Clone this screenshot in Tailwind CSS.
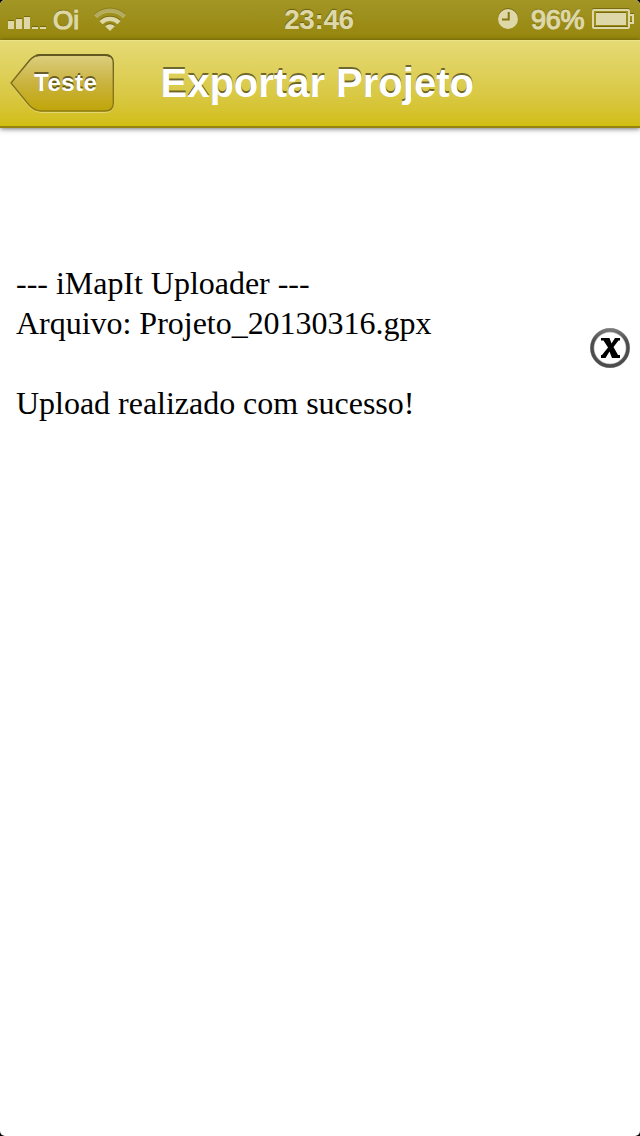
<!DOCTYPE html>
<html lang="pt-BR">
  <head>
    <meta charset="UTF-8" />
    <meta name="viewport" content="width=device-width, initial-scale=1.0" />
    <script src="https://cdn.jsdelivr.net/npm/@tailwindcss/browser@4"></script>
    <title>Exportar Projeto</title>
  </head>
  <body class="bg-black">
    <div class="flex flex-col w-[640px] h-[1136px] bg-white rounded-[5px] overflow-hidden">
      <!-- status bar -->
      <div class="grid grid-cols-3 items-center h-10 shrink-0 bg-linear-to-b from-[#a39625] to-[#96860b] text-[#ded8a8] font-['Liberation_Sans',sans-serif] font-bold text-[28px] leading-10 [text-shadow:0_-1px_1px_rgba(70,60,0,0.6)]">
        <div class="flex items-center pl-2">
          <svg class="w-[38px] h-10 shrink-0 drop-shadow-[0_-1px_0_rgba(70,60,0,0.45)]" viewBox="0 0 38 40" fill="#ded8a8">
            <path d="M0 21h6v8H0zM8 19h6v10H8zM16 17h6v12h-6zM24 27h6v2h-6zM32 27h6v2h-6z" />
          </svg>
          <span class="ml-[7px] w-[26px] text-[26px] font-normal [-webkit-text-stroke:1.2px_#ded8a8]">Oi</span>
          <svg class="ml-[15px] w-8 h-10 shrink-0 drop-shadow-[0_-1px_0_rgba(70,60,0,0.45)]" viewBox="0 0 32 40" fill="none" stroke="#ded8a8" stroke-width="4.400">
            <path d="M1.500 16.600a20.500 20.500 0 0 1 29 0" opacity=".5" />
            <path d="M7 22.600a12.700 12.700 0 0 1 18 0" />
            <path d="M16 31l-4.800-4.800a6.800 6.800 0 0 1 9.600 0z" fill="#ded8a8" stroke="none" />
          </svg>
        </div>
        <div class="pr-0.5 text-center tracking-[-0.4px]">23:46</div>
        <div class="flex items-center justify-end pr-1.5">
          <svg class="w-5 h-10 shrink-0 drop-shadow-[0_-1px_0_rgba(70,60,0,0.45)]" viewBox="0 0 20 40">
            <circle cx="10" cy="19" r="10" fill="#ded8a8" />
            <path d="M10.700 12v7.500H4" fill="none" stroke="#83760c" stroke-width="2" />
          </svg>
          <span class="ml-[13px] w-[54px] text-[27px] font-normal tracking-[-0.2px] [-webkit-text-stroke:1.2px_#ded8a8]">96%</span>
          <svg class="ml-[7px] w-[42px] h-10 shrink-0 drop-shadow-[0_-1px_0_rgba(70,60,0,0.45)]" viewBox="0 0 42 40" fill="none" stroke="#ded8a8" stroke-width="2">
            <rect x="1" y="10" width="36" height="18" rx="1" />
            <path d="M38 15h3v8h-3" />
            <path d="M4 13h30v12H4z" fill="#ded8a8" stroke="none" />
          </svg>
        </div>
      </div>

      <!-- navigation bar -->
      <div class="relative z-10 flex items-center h-[88px] shrink-0 bg-linear-to-b from-[#e5da74] to-[#d2be0f] border-t border-t-[#ece287] border-b-2 border-b-[#95850c] shadow-[0_1px_5px_rgba(0,0,0,0.55)] font-['Liberation_Sans',sans-serif] font-bold text-white">
        <button class="relative ml-2.5 w-[104px] h-[60px] shrink-0">
          <svg class="absolute inset-0 w-[104px] h-[60px]" viewBox="0 0 104 60">
            <defs>
              <linearGradient id="fill" x1="0" y1="0" x2="0" y2="1">
                <stop offset="0" stop-color="#dccf80" />
                <stop offset=".5" stop-color="#cab33f" />
                <stop offset="1" stop-color="#c0a508" />
              </linearGradient>
              <linearGradient id="edge" x1="0" y1="0" x2="0" y2="1">
                <stop offset="0" stop-color="#625820" />
                <stop offset=".4" stop-color="#7d6e20" />
                <stop offset="1" stop-color="#8d7b14" />
              </linearGradient>
            </defs>
            <path d="M1 30L19 8.500Q24.500 2 31 2H95Q103.300 2 103.300 10V50Q103.300 58.400 95 58.400H31Q24.500 58.400 19 52.500Z" fill="none" stroke="#ece397" stroke-opacity=".7" />
            <path d="M1 29L19 7Q24.500 .8 31 .8H95Q103.300 .8 103.300 9V49Q103.300 57 95 57H31Q24.500 57 19 51Z" fill="url(#fill)" stroke="url(#edge)" stroke-width="1.400" />
            <path d="M26 1.700Q28 1 31 1H95Q98 1 100 2.500" fill="none" stroke="#625820" stroke-width="2" />
          </svg>
          <span class="relative block pl-6 pb-[3px] text-left text-2xl leading-[55px] tracking-[0.5px] [text-shadow:0_-2px_0_rgba(0,0,0,0.5)]">Teste</span>
        </button>
        <h1 class="ml-[46.5px] pb-0.5 text-[40px] leading-[82px] whitespace-nowrap [text-shadow:0_-2px_0_rgba(0,0,0,0.5)]">Exportar Projeto</h1>
      </div>

      <!-- content -->
      <div class="flex items-start justify-between pt-[135px] pl-4 pr-2.5 font-['Liberation_Serif',serif] text-[32px] leading-10 text-black">
        <p class="tracking-[-0.02px]">
          --- iMapIt Uploader ---<br />
          Arquivo: Projeto_20130316.gpx<br />
          <br />
          Upload realizado com sucesso!
        </p>
        <button class="mt-[65px]">
          <svg class="w-10 h-10" viewBox="0 0 40 40">
            <defs>
              <linearGradient id="ring" x1="0" y1="0" x2="0" y2="1">
                <stop offset="0" stop-color="#777" />
                <stop offset=".3" stop-color="#4c4c4c" />
                <stop offset="1" stop-color="#4c4c4c" />
              </linearGradient>
            </defs>
            <circle cx="20" cy="20" r="17.800" fill="#fff" stroke="#b5b5b5" stroke-width="4.400" />
            <circle cx="20" cy="20" r="18" fill="none" stroke="url(#ring)" stroke-width="3.400" />
            <path d="M11 10H19.500L21.500 15.500L25 10H30V12.500H28.500L23.500 19L28 27H30V30H22L19.500 23.500L15.500 30H11V27H12L18 19.500L13.500 12.500H11Z" fill="#000" />
          </svg>
        </button>
      </div>
    </div>
  </body>
</html>
